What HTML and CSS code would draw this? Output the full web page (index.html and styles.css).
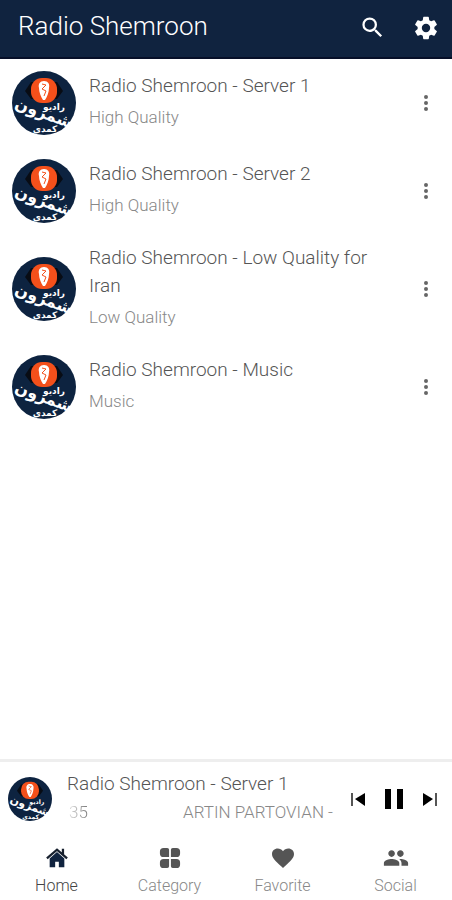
FILE: index.html
```html
<!DOCTYPE html>
<html lang="en">
<head>
<meta charset="utf-8">
<meta name="viewport" content="width=device-width, initial-scale=1">
<title>Radio Shemroon</title>
<link rel="stylesheet" href="styles.css">
</head>
<body>
<svg class="defs" aria-hidden="true">
  <symbol id="logo" viewBox="0 0 64 64">
    <circle cx="32" cy="32" r="32" fill="#0d2340"/>
    <path d="M13 20l6-9h26l6 9-6 8H19z" fill="#080c14"/>
    <rect x="19" y="7" width="26" height="25" rx="11" fill="#f4501b"/>
    <path d="M32 10c-4 0-6 3-5 7 0 4 2 9 4 12h2c2-3 4-8 4-12 1-4-1-7-5-7z" fill="#fff"/>
    <path d="M30 13l4 1-4 4 4 2-2 5" fill="none" stroke="#f4501b" stroke-width="1"/>
    <g class="logo-text" direction="rtl" text-anchor="middle">
      <text x="42" y="39" font-size="9">رادیو</text>
      <text x="30" y="47" font-size="16" transform="rotate(20 30 47)">شمرون</text>
      <text x="33" y="61" font-size="9">کمدی</text>
    </g>
  </symbol>
  <symbol id="dots" viewBox="0 0 24 24"><path d="M12 8a2 2 0 1 0 0-4 2 2 0 0 0 0 4zm0 2a2 2 0 1 0 0 4 2 2 0 0 0 0-4zm0 6a2 2 0 1 0 0 4 2 2 0 0 0 0-4z"/></symbol>
</svg>
<div class="app">
  <header class="bar">
    <h1>Radio Shemroon</h1>
    <button class="tool" aria-label="Search"><svg width="27" height="27" viewBox="0 0 24 24"><path d="M15.500 14h-.79l-.28-.27A6.470 6.470 0 0 0 16 9.500 6.500 6.500 0 1 0 9.500 16c1.610 0 3.090-.59 4.230-1.570l.27.28v.79l5 4.990L20.490 19l-4.990-5zm-6 0a4.500 4.500 0 1 1 0-9 4.500 4.500 0 0 1 0 9z"/></svg></button>
    <button class="tool" aria-label="Settings"><svg width="28" height="28" viewBox="0 0 24 24"><path d="M19.140 12.940c.04-.3.060-.61.060-.94 0-.32-.02-.64-.07-.94l2.030-1.580a.49.49 0 0 0 .12-.61l-1.920-3.320a.49.49 0 0 0-.59-.22l-2.390.96c-.5-.38-1.030-.7-1.620-.94l-.36-2.540a.48.48 0 0 0-.48-.41h-3.840c-.24 0-.43.17-.47.41l-.36 2.540c-.59.24-1.130.57-1.620.94l-2.390-.96a.48.48 0 0 0-.59.22L2.740 8.870a.47.47 0 0 0 .12.610l2.030 1.580c-.05.3-.09.63-.09.94s.02.640.07.940l-2.030 1.580a.49.49 0 0 0-.12.610l1.920 3.320c.12.220.37.290.59.220l2.390-.96c.5.380 1.030.7 1.620.940l.36 2.540c.05.240.24.410.48.410h3.840c.24 0 .44-.17.470-.41l.36-2.540c.59-.24 1.130-.56 1.620-.94l2.390.96c.22.080.47 0 .59-.22l1.920-3.320a.47.47 0 0 0-.12-.61zM12 15.600a3.600 3.600 0 1 1 0-7.200 3.600 3.600 0 0 1 0 7.200z"/></svg></button>
  </header>
  <main>
    <ul class="stations">
      <li class="station">
        <svg class="logo"><use href="#logo"/></svg>
        <div class="info"><h2>Radio Shemroon - Server 1</h2><p>High Quality</p></div>
        <button class="more" aria-label="More options"><svg width="24" height="26"><use href="#dots"/></svg></button>
      </li>
      <li class="station">
        <svg class="logo"><use href="#logo"/></svg>
        <div class="info"><h2>Radio Shemroon - Server 2</h2><p>High Quality</p></div>
        <button class="more" aria-label="More options"><svg width="24" height="26"><use href="#dots"/></svg></button>
      </li>
      <li class="station">
        <svg class="logo"><use href="#logo"/></svg>
        <div class="info"><h2>Radio Shemroon - Low Quality for Iran</h2><p>Low Quality</p></div>
        <button class="more" aria-label="More options"><svg width="24" height="26"><use href="#dots"/></svg></button>
      </li>
      <li class="station">
        <svg class="logo"><use href="#logo"/></svg>
        <div class="info"><h2>Radio Shemroon - Music</h2><p>Music</p></div>
        <button class="more" aria-label="More options"><svg width="24" height="26"><use href="#dots"/></svg></button>
      </li>
    </ul>
  </main>
  <section class="player" aria-label="Now playing">
    <svg class="logo small"><use href="#logo"/></svg>
    <div class="now">
      <h2>Radio Shemroon - Server 1</h2>
      <p class="ticker"><span class="fade">35</span><span>ARTIN PARTOVIAN -</span></p>
    </div>
    <div class="controls">
      <button aria-label="Previous"><svg width="16" height="16" viewBox="0 0 16 16"><path d="M1 2h2v13H1z" fill="#555"/><path d="M15 2v13L5 8z"/></svg></button>
      <button aria-label="Pause"><svg width="20" height="22" viewBox="0 0 20 22"><path d="M1 1h6v20H1zM13 1h6v20h-6z"/></svg></button>
      <button aria-label="Next"><svg width="16" height="16" viewBox="0 0 16 16"><path d="M13 2h2v13h-2z" fill="#555"/><path d="M1 2v13l10-7z"/></svg></button>
    </div>
  </section>
  <nav class="tabs">
    <a class="active" href="#home"><svg viewBox="0 0 24 24"><path d="M12 5.500L4 12.500V22h6v-6h4v6h6v-9.500z"/><path d="M1 12.500L12 3l11 9.500M18.500 2v6" fill="none" stroke="#17202e" stroke-width="2.500"/></svg>Home</a>
    <a href="#category"><svg viewBox="0 0 24 24"><path d="M5 1h4a2 2 0 0 1 2 2v8H5a4 4 0 0 1-4-4V5a4 4 0 0 1 4-4zM15 1h4a4 4 0 0 1 4 4v2a4 4 0 0 1-4 4h-6V3a2 2 0 0 1 2-2zM5 13h6v8a2 2 0 0 1-2 2H5a4 4 0 0 1-4-4v-2a4 4 0 0 1 4-4zM13 13h6a4 4 0 0 1 4 4v2a4 4 0 0 1-4 4h-4a2 2 0 0 1-2-2z"/></svg>Category</a>
    <a href="#favorite"><svg viewBox="0 0 24 24"><path d="M12 23L10 21C4 15 0 12 0 7.500 0 4 2.800 1.500 6.200 1.500c2.300 0 4.500 1.200 5.800 3 1.300-1.800 3.500-3 5.800-3C21.200 1.500 24 4 24 7.500c0 4.500-4 7.500-10 13.500z"/></svg>Favorite</a>
    <a href="#social"><svg class="wide" viewBox="1 2 22 20"><path d="M16 11c1.660 0 2.990-1.340 2.990-3S17.660 5 16 5s-3 1.340-3 3 1.340 3 3 3zm-8 0c1.660 0 2.990-1.340 2.990-3S9.660 5 8 5 5 6.340 5 8s1.340 3 3 3zm0 2c-2.330 0-7 1.170-7 3.500V19h14v-2.500c0-2.330-4.670-3.500-7-3.500zm8 0c-.29 0-.62.020-.97.050 1.160.84 1.970 1.970 1.970 3.450V19h6v-2.500c0-2.330-4.670-3.500-7-3.500z"/></svg>Social</a>
  </nav>
</div>
</body>
</html>
```
FILE: styles.css
```css
* { box-sizing: border-box; }
body, h1, h2, p, ul { margin: 0; padding: 0; }
body { font-family: Roboto, "Noto Sans", sans-serif; font-weight: 300; background: #fff; }
svg { display: block; flex: none; fill: currentColor; }
button { border: 0; padding: 0; background: none; color: inherit; display: grid; place-items: center; }
.defs { position: absolute; width: 0; height: 0; }
.app { min-height: 100vh; display: flex; flex-direction: column; }
main { flex: 1; }

.bar { display: flex; align-items: center; gap: 26px; padding: 0 12px 2px 18px; height: 59px; background: #10233f; border-bottom: 2px solid #070f28; color: #fff; }
.bar h1 { flex: 1; font-size: 26px; line-height: 30px; padding-bottom: 4px; font-weight: 300; }
.tool { width: 28px; height: 28px; }

.stations { list-style: none; }
.station { display: flex; align-items: center; gap: 13px; min-height: 88px; padding: 9px 14px 9px 12px; }
.logo { width: 64px; height: 64px; }
.logo-text { fill: #fff; font-family: "DejaVu Sans", sans-serif; font-weight: 700; }
.info { flex: 1; padding-right: 20px; padding-bottom: 3px; }
.info h2, .now h2 { font-size: 19px; line-height: 28px; font-weight: 300; color: #555; }
.info p { margin-top: 3px; font-size: 17px; line-height: 28px; color: #888; }
.more { width: 24px; height: 26px; color: #666; }

.player { display: flex; align-items: center; padding: 0 14px 0 8px; height: 77px; border-top: 3px solid #eee; }
.small { width: 44px; height: 44px; }
.now { flex: 1; padding-left: 15px; padding-bottom: 2px; }
.ticker { display: flex; justify-content: space-between; padding: 0 4px 0 2px; font-size: 17px; line-height: 28px; color: #888; white-space: nowrap; }
.fade { background: linear-gradient(90deg, #ddd, #777); background-clip: text; color: transparent; }
.controls { display: flex; align-items: center; gap: 18px; padding-left: 13px; color: #000; }

.tabs { display: grid; grid-template-columns: repeat(4, 1fr); height: 64px; }
.tabs a { display: flex; flex-direction: column; align-items: center; gap: 5px; padding-top: 11px; font-size: 16px; line-height: 24px; color: #888; text-decoration: none; }
.tabs svg { width: 22px; height: 22px; color: #555; }
.tabs .wide { width: 26px; }
.tabs .active { color: #444; }
.tabs .active svg { width: 24px; color: #10233f; }
```
